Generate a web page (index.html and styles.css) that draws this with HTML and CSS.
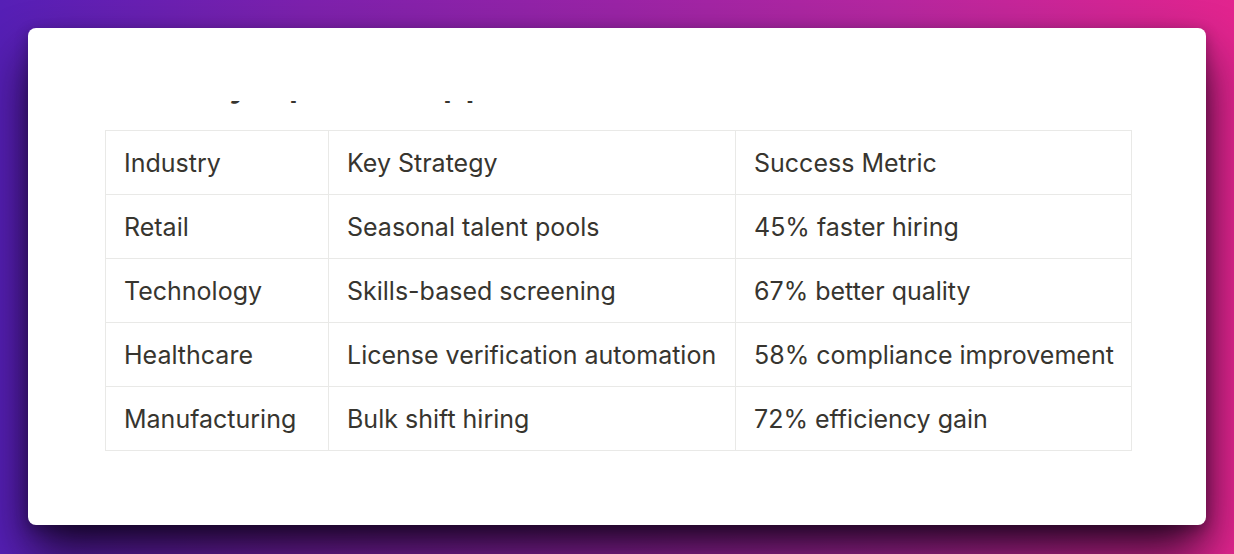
FILE: index.html
```html
<!DOCTYPE html>
<html lang="en">
<head>
<meta charset="utf-8">
<title>Industry Applications</title>
<link rel="stylesheet" href="styles.css">
</head>
<body>
<div class="card">
  <div class="clip">
    <h2 class="heading">Industry-Specific Applications</h2>
  </div>
  <table class="grid">
    <colgroup>
      <col class="c1"><col class="c2"><col class="c3">
    </colgroup>
    <tbody>
      <tr><td>Industry</td><td>Key Strategy</td><td>Success Metric</td></tr>
      <tr><td>Retail</td><td>Seasonal talent pools</td><td>45% faster hiring</td></tr>
      <tr><td>Technology</td><td>Skills-based screening</td><td>67% better quality</td></tr>
      <tr><td>Healthcare</td><td>License verification automation</td><td>58% compliance improvement</td></tr>
      <tr><td>Manufacturing</td><td>Bulk shift hiring</td><td>72% efficiency gain</td></tr>
    </tbody>
  </table>
</div>
</body>
</html>
```
FILE: styles.css
```css
html, body {
  margin: 0;
  padding: 0;
}
body {
  width: 1234px;
  height: 554px;
  box-sizing: border-box;
  padding: 28px;
  background: linear-gradient(to right, #561fb6 0%, #7d21ad 25%, #9a24a6 50%, #b527a0 72%, #e2248e 100%);
  font-family: Inter, "Noto Sans", sans-serif;
  overflow: hidden;
}
.card {
  height: 497px;
  box-sizing: border-box;
  background: #ffffff;
  border-radius: 8px;
  padding: 73px 75px 0 77px;
  box-shadow: 0 28px 50px -2px rgba(8, 0, 16, 0.85), 0 4px 14px rgba(8, 0, 16, 0.3);
}
.clip {
  height: 29px;
  overflow: hidden;
}
.heading {
  margin: -39px 0 0 0;
  font-size: 36px;
  line-height: 43px;
  font-weight: 600;
  color: #37352f;
  white-space: nowrap;
}
.grid {
  border-collapse: collapse;
  table-layout: fixed;
  width: 1026px;
  color: #37352f;
  font-size: 25px;
}
.c1 { width: 223px; }
.c2 { width: 407px; }
.c3 { width: 396px; }
.grid td {
  border: 1px solid #e9e9e7;
  height: 64px;
  box-sizing: border-box;
  padding: 1px 16px 0 18px;
  vertical-align: middle;
  white-space: nowrap;
  line-height: 30px;
}
```
